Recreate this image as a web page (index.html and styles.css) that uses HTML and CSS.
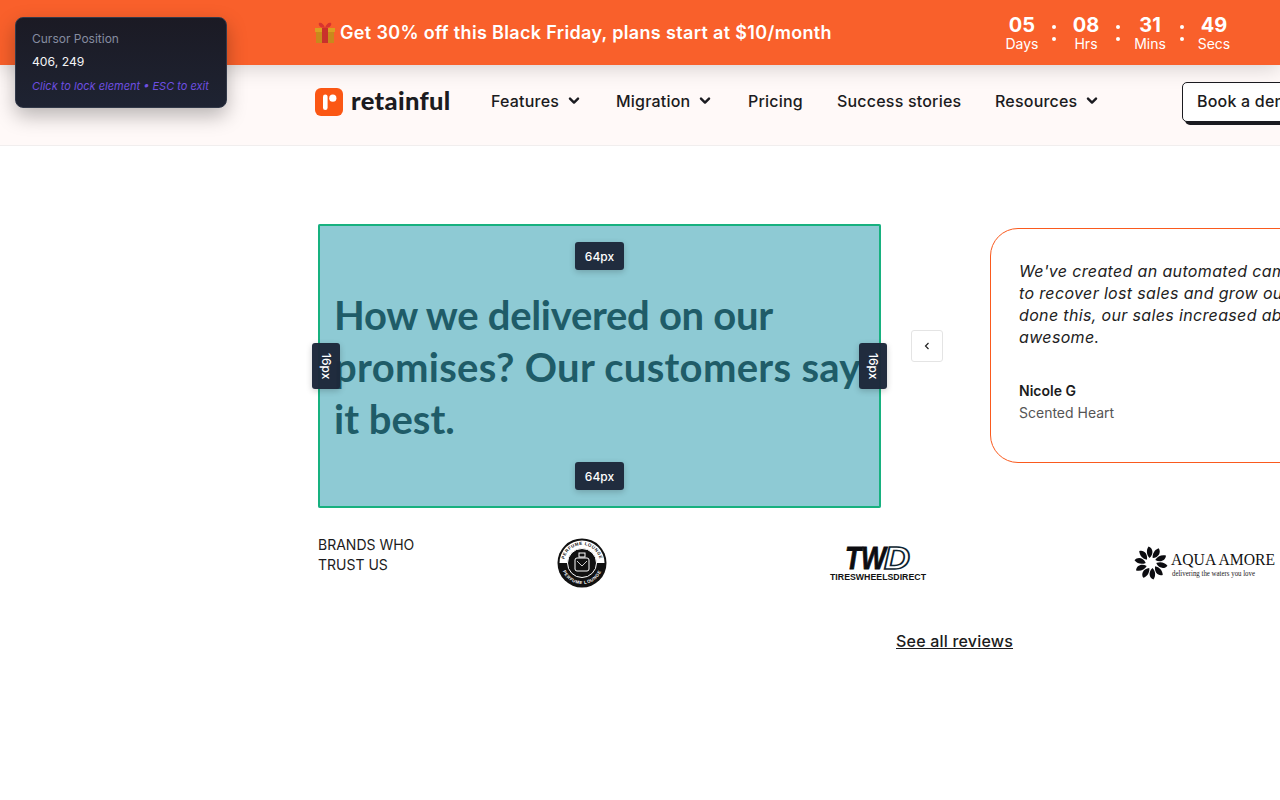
FILE: index.html
```html
<!DOCTYPE html>
<html lang="en">

<head>
    <meta charset="UTF-8">
    <meta name="viewport" content="width=device-width, initial-scale=1.0">
    <title>Retainful</title>
    <link rel="stylesheet" href="styles.css">
</head>

<body>
    <div class="topbar">
        <svg class="gift" viewBox="0 0 22 22" width="22" height="22">
            <rect x="2" y="8" width="18" height="13" fill="#c8891c"/>
            <rect x="1" y="6" width="20" height="4" fill="#d9a021"/>
            <rect x="8" y="6" width="6" height="15" fill="#c9302c"/>
            <path d="M11 6 C6 6 4 3 5 1 C7 0 10 2 11 6 C12 2 15 0 17 1 C18 3 16 6 11 6Z" fill="#d8342f"/>
        </svg>
        <span class="promo">Get 30% off this Black Friday, plans start at $10/month</span>
        <div class="countdown">
            <div class="unit"><b>05</b><span>Days</span></div>
            <i class="colon"></i>
            <div class="unit"><b>08</b><span>Hrs</span></div>
            <i class="colon"></i>
            <div class="unit"><b>31</b><span>Mins</span></div>
            <i class="colon"></i>
            <div class="unit"><b>49</b><span>Secs</span></div>
        </div>
    </div>

    <div class="nav">
        <a class="logo">
            <svg viewBox="0 0 28 28" width="28" height="28">
                <rect width="28" height="28" rx="6" fill="#fb5714"/>
                <rect x="8" y="6.5" width="4.6" height="15.5" rx="2.3" fill="#fff"/>
                <circle cx="17.8" cy="10.2" r="3.6" fill="#fff"/>
            </svg>
            <span>retainful</span>
        </a>
        <ul class="menu">
            <li class="m-features">Features <svg class="chev" viewBox="0 0 12 8" width="12" height="8"><path d="M2 1.6 L6 5.6 L10 1.6" /></svg></li>
            <li class="m-migration">Migration <svg class="chev" viewBox="0 0 12 8" width="12" height="8"><path d="M2 1.6 L6 5.6 L10 1.6" /></svg></li>
            <li class="m-pricing">Pricing</li>
            <li class="m-stories">Success stories</li>
            <li class="m-resources">Resources <svg class="chev" viewBox="0 0 12 8" width="12" height="8"><path d="M2 1.6 L6 5.6 L10 1.6" /></svg></li>
        </ul>
        <a class="demo">Book a demo</a>
    </div>

    <div class="main">
        <div class="reviews">
            <div class="headline">
                <h2><span class="line-a">How we delivered on our</span><br><span class="line-b">promises? Our customers say</span><br>it best.</h2>
                <span class="tag tag-top">64px</span>
                <span class="tag tag-bottom">64px</span>
                <span class="tag tag-left">16px</span>
                <span class="tag tag-right">16px</span>
            </div>
            <div class="carousel">
                <button type="button" class="prev">
                    <svg viewBox="0 0 10 10" width="10" height="10"><path d="M6.5 2 L3.5 5 L6.5 8"/></svg>
                </button>
                <div class="card">
                    <p class="quote">We've created an automated campaign with Retainful<br>to recover lost sales and grow our revenue. Having<br>done this, our sales increased about 20% which is<br>awesome.</p>
                    <div class="who">Nicole G</div>
                    <div class="shop">Scented Heart</div>
                </div>
            </div>
        </div>

        <div class="brands">
            <div class="brands-label">BRANDS WHO<br>TRUST US</div>
            <svg class="b-perfume" viewBox="0 0 50 50" width="50" height="50">
                <defs>
                    <path id="ringTop" d="M7 25 A18 18 0 0 1 43 25"/>
                    <path id="ringBottom" d="M4 25 A21 21 0 0 0 46 25"/>
                </defs>
                <circle cx="25" cy="25" r="24.5" fill="#111"/>
                <path d="M2.5 25 A22.5 22.5 0 0 1 47.5 25Z" fill="#fff"/>
                <circle cx="25" cy="25" r="14.5" fill="#111" stroke="#fff" stroke-width="1"/>
                <rect x="18" y="20" width="14" height="13" rx="2" fill="none" stroke="#fff" stroke-width="1"/>
                <rect x="22" y="15" width="6" height="4" fill="none" stroke="#fff" stroke-width="1"/>
                <path d="M20 23 L25 28 L30 23" fill="none" stroke="#fff" stroke-width=".8"/>
                <text class="ring ring-dark"><textPath href="#ringTop" startOffset="50%" text-anchor="middle">PERFUME LOUNGE</textPath></text>
                <text class="ring ring-light"><textPath href="#ringBottom" startOffset="50%" text-anchor="middle">PERFUME LOUNGE</textPath></text>
            </svg>
            <svg class="b-tires" viewBox="0 0 98 38" width="98" height="38">
                <text class="twd" x="16" y="25" textLength="41" lengthAdjust="spacingAndGlyphs">TW</text>
                <text class="twd-d" x="55" y="25" textLength="26" lengthAdjust="spacingAndGlyphs">D</text>
                <text class="tires" x="1" y="36" textLength="96" lengthAdjust="spacingAndGlyphs">TIRESWHEELSDIRECT</text>
            </svg>
            <svg class="b-aqua" viewBox="0 0 142 34" width="142" height="34">
                <g fill="#0c0c10">
                    <path id="petal" d="M15.5 12 C12.5 9 12 4 14.5 .5 C19 2 20 8 15.5 12Z"/>
                    <use href="#petal" transform="rotate(36 17 17)"/>
                    <use href="#petal" transform="rotate(72 17 17)"/>
                    <use href="#petal" transform="rotate(108 17 17)"/>
                    <use href="#petal" transform="rotate(144 17 17)"/>
                    <use href="#petal" transform="rotate(180 17 17)"/>
                    <use href="#petal" transform="rotate(216 17 17)"/>
                    <use href="#petal" transform="rotate(252 17 17)"/>
                    <use href="#petal" transform="rotate(288 17 17)"/>
                    <use href="#petal" transform="rotate(324 17 17)"/>
                </g>
                <text class="aqua" x="37" y="19" textLength="104" lengthAdjust="spacingAndGlyphs">AQUA AMORE</text>
                <text class="aqua-sub" x="38" y="30" textLength="83" lengthAdjust="spacingAndGlyphs">delivering the waters you love</text>
            </svg>
        </div>

        <div class="all-reviews"><a>See all reviews</a></div>
    </div>

    <div class="cursor-box">
        <div class="cursor-title">Cursor Position</div>
        <div class="cursor-pos">406, 249</div>
        <div class="cursor-hint">Click to lock element • ESC to exit</div>
    </div>
</body>

</html>
```

FILE: styles.css
```css
html, body {
    margin: 0;
    height: 800px;
    overflow: hidden;
    background: #fff;
}

body {
    font-family: "Inter", sans-serif;
    color: #1b1b20;
    width: 1280px;
}

.topbar {
    position: relative;
    z-index: 2;
    display: flex;
    align-items: center;
    height: 65px;
    padding-left: 314px;
    background: #f9602b;
    color: #fff;
    box-shadow: 0 3px 20px rgba(0, 0, 0, .17);
}

.gift {
    flex-shrink: 0;
    margin-right: 4px;
}

.promo {
    font-weight: 600;
    font-size: 18px;
    letter-spacing: .34px;
    white-space: nowrap;
    width: 650px;
    flex-shrink: 0;
}

.countdown {
    display: flex;
}

.unit {
    width: 64px;
    text-align: center;
}

.unit b {
    display: block;
    font-size: 20px;
    font-weight: 700;
    line-height: 22px;
    margin-top: 2px;
}

.unit span {
    display: block;
    font-size: 14px;
    line-height: 18px;
    margin-top: -1px;
}

.colon {
    width: 0;
    position: relative;
}

.colon::before,
.colon::after {
    content: "";
    position: absolute;
    left: -2px;
    width: 4px;
    height: 4px;
    border-radius: 50%;
    background: #fff;
}

.colon::before { top: 13px; }
.colon::after { top: 25px; }

.nav {
    box-sizing: border-box;
    display: flex;
    align-items: center;
    height: 81px;
    padding: 0 0 6px 315px;
    background: #fff9f8;
    border-bottom: 1px solid #f1eeee;
    white-space: nowrap;
    font-size: 16px;
    font-weight: 500;
    letter-spacing: .2px;
}

.logo {
    display: flex;
    align-items: center;
    gap: 8px;
    width: 176px;
    flex-shrink: 0;
}

.logo span {
    font-family: "Lato", sans-serif;
    font-weight: 900;
    font-size: 25.5px;
    letter-spacing: .35px;
    color: #1b1b20;
    margin-bottom: 4px;
}

.menu {
    display: flex;
    list-style: none;
    margin: -2px 0 0;
    padding: 0;
    flex-shrink: 0;
}

.menu li {
    display: flex;
    align-items: center;
    gap: 8.5px;
}

.m-features { width: 125px; }
.m-migration { width: 132px; }
.m-pricing { width: 89px; }
.m-stories { width: 158px; }
.m-resources { width: 187px; }

.chev path {
    fill: none;
    stroke: #1b1b20;
    stroke-width: 2.4;
    stroke-linecap: round;
    stroke-linejoin: round;
}

.demo {
    flex-shrink: 0;
    box-sizing: border-box;
    height: 40px;
    width: 120px;
    padding: 0 14px;
    line-height: 37px;
    border: 1.5px solid #1b1b20;
    border-radius: 5px;
    background: #fff;
    box-shadow: 3px 3px 0 #1b1b20;
}

.main {
    padding-top: 78px;
}

.reviews {
    display: flex;
    align-items: flex-start;
    padding-left: 318px;
    width: 1400px;
}

.headline {
    position: relative;
    flex-shrink: 0;
    box-sizing: border-box;
    width: 563px;
    height: 284px;
    padding: 65px 16px 0;
    background: #8ecad4;
    box-shadow: inset 0 0 0 2px #17b17f;
    border-radius: 2px;
}

.headline h2 {
    margin: 0;
    font-family: "Lato", sans-serif;
    font-weight: 700;
    font-size: 40px;
    line-height: 52px;
    color: #1f5c68;
    white-space: nowrap;
}

.line-a { letter-spacing: -.3px; }
.line-b { letter-spacing: .3px; }

.tag {
    position: absolute;
    box-sizing: border-box;
    display: flex;
    align-items: center;
    justify-content: center;
    width: 49px;
    height: 28px;
    background: rgba(30, 41, 59, .98);
    border-radius: 3px;
    color: #fff;
    font-size: 12px;
    font-weight: 500;
    box-shadow: 0 2px 6px rgba(0, 0, 0, .2);
}

.tag-top { top: 18px; left: 257px; }
.tag-bottom { bottom: 18px; left: 257px; }

.tag-left,
.tag-right {
    width: 28px;
    height: 46px;
    top: 119px;
    writing-mode: vertical-rl;
}

.tag-left { left: -6px; }
.tag-right { right: -6px; }

.carousel {
    display: flex;
    align-items: center;
    margin-top: 4px;
    margin-left: 30px;
    gap: 47px;
    flex-shrink: 0;
}

.prev {
    width: 32px;
    height: 32px;
    padding: 0;
    display: flex;
    align-items: center;
    justify-content: center;
    background: #fff;
    border: 1px solid #e4e4e4;
    border-radius: 3px;
}

.prev path {
    fill: none;
    stroke: #222;
    stroke-width: 1.2;
}

.card {
    box-sizing: border-box;
    width: 480px;
    height: 235px;
    padding: 31px 28px;
    border: 1px solid #fa5a1e;
    border-radius: 28px;
}

.quote {
    margin: 0 0 32px;
    font-style: italic;
    font-size: 16px;
    letter-spacing: .35px;
    line-height: 22px;
    white-space: nowrap;
    color: #222;
}

.who {
    font-size: 14px;
    font-weight: 600;
    line-height: 22px;
}

.shop {
    font-size: 14px;
    line-height: 22px;
    color: #555;
}

.brands {
    display: flex;
    align-items: center;
    margin-top: 27px;
    padding-left: 318px;
    height: 56px;
    width: 1100px;
}

.brands-label {
    width: 239px;
    flex-shrink: 0;
    font-size: 14px;
    line-height: 20px;
    margin-top: -16px;
}

.brands svg {
    flex-shrink: 0;
}

.b-tires {
    margin-left: 222px;
}

.b-aqua {
    margin-left: 207px;
}

.ring {
    font-family: "Liberation Sans", sans-serif;
    font-size: 4.4px;
    font-weight: 700;
    letter-spacing: .5px;
}

.ring-dark { fill: #111; }
.ring-light { fill: #fff; }

.twd {
    font-family: "Liberation Sans", sans-serif;
    font-style: italic;
    font-weight: 700;
    font-size: 32px;
    fill: #0c0c10;
    stroke: #0c0c10;
    stroke-width: .8;
}

.twd-d {
    font-family: "Liberation Sans", sans-serif;
    font-style: italic;
    font-weight: 700;
    font-size: 32px;
    fill: #fff;
    stroke: #0d2430;
    stroke-width: 1.6;
}

.tires {
    font-family: "Liberation Sans", sans-serif;
    font-weight: 700;
    font-size: 9.5px;
    fill: #111;
}

.aqua {
    font-family: "Liberation Serif", serif;
    font-size: 16px;
    fill: #111;
}

.aqua-sub {
    font-family: "Liberation Serif", serif;
    font-size: 8px;
    fill: #222;
}

.all-reviews {
    margin-top: 38px;
    padding-left: 896px;
    font-size: 16px;
    font-weight: 500;
    letter-spacing: .2px;
    line-height: 24px;
}

.all-reviews a {
    text-decoration: underline;
}

.cursor-box {
    position: absolute;
    z-index: 5;
    left: 15px;
    top: 17px;
    box-sizing: border-box;
    width: 212px;
    height: 91px;
    padding: 13px 16px;
    background: linear-gradient(180deg, #1b1a24, #1e2332);
    border: 1px solid #333a4a;
    border-radius: 8px;
    box-shadow: 0 8px 20px rgba(0, 0, 0, .28);
}

.cursor-title {
    font-size: 12px;
    line-height: 16px;
    color: #868ca0;
}

.cursor-pos {
    margin-top: 7px;
    font-size: 12.2px;
    line-height: 16px;
    color: #f4f4f6;
}

.cursor-hint {
    margin-top: 8px;
    font-size: 11px;
    line-height: 16px;
    font-style: italic;
    color: #6f4fe0;
    white-space: nowrap;
}
```
